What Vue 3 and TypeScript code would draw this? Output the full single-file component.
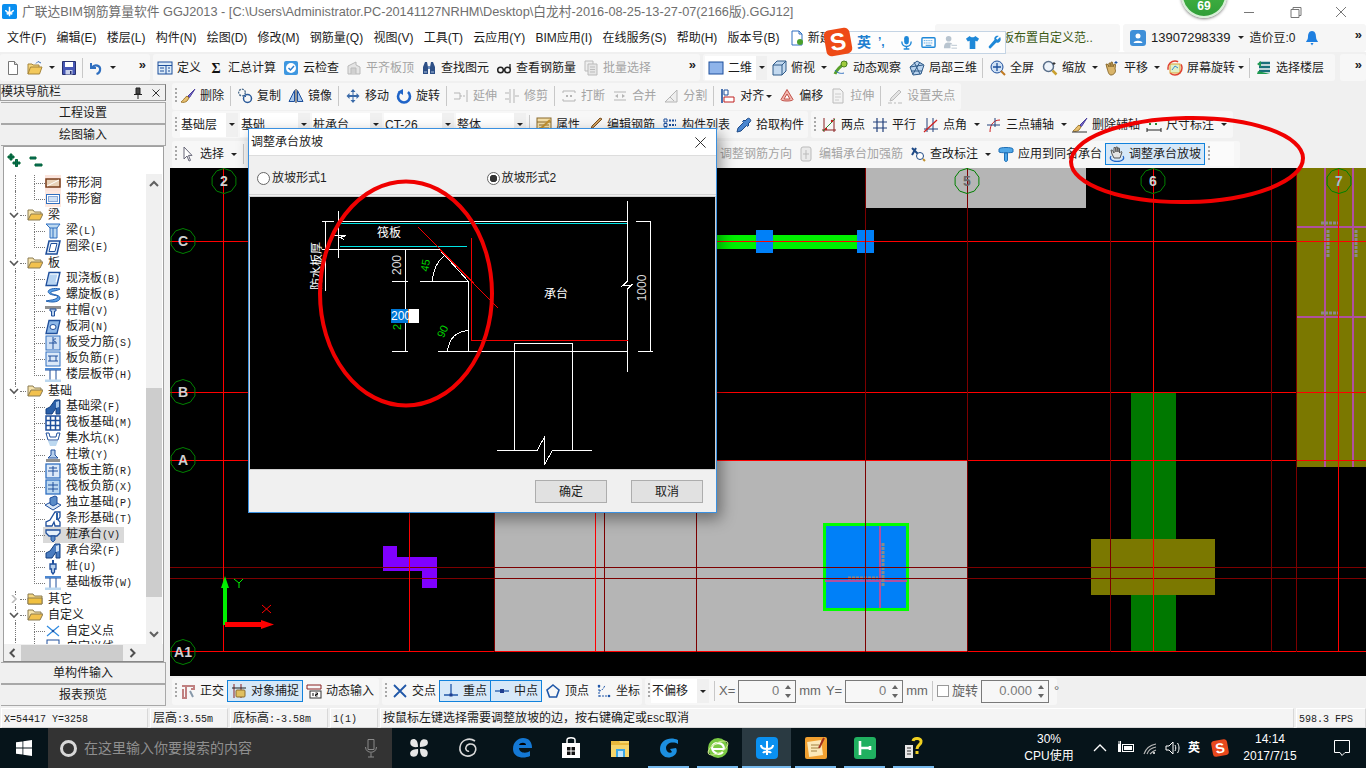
<template>
  <div class="screen">
    <header class="titlebar">
      <svg class="app-ico" viewBox="0 0 16 16" v-html="ICONS.app"></svg>
      <span class="title-text">广联达BIM钢筋算量软件 GGJ2013 - [C:\Users\Administrator.PC-20141127NRHM\Desktop\白龙村-2016-08-25-13-27-07(2166版).GGJ12]</span>
      <div class="winbtns">
        <svg viewBox="0 0 46 20"><path d="M18 10.5h10" stroke="#777" fill="none"/></svg>
        <svg viewBox="0 0 46 20"><path d="M19 7.5h8v8h-8zM21 7.5v-2h8v8h-2" stroke="#777" fill="none"/></svg>
        <svg viewBox="0 0 46 20"><path d="M18 5l10 10M28 5L18 15" stroke="#777" fill="none"/></svg>
      </div>
    </header>

    <nav class="menubar">
      <span v-for="m in menus" :key="m" class="menu">{{ m }}</span>
      <span class="menu newdoc">
        <svg class="ico" viewBox="0 0 16 16" v-html="ICONS.newdoc"></svg>新建
      </span>
      <span class="news">筏板布置自定义范..</span>
      <div class="account">
        <svg class="ico" viewBox="0 0 16 16" v-html="ICONS.user"></svg>
        <span class="phone">13907298339</span>
        <i class="caret"></i>
        <span class="beans">造价豆:0</span>
        <svg class="ico bell" viewBox="0 0 16 16" v-html="ICONS.bell"></svg>
        <span class="more">»</span>
      </div>
    </nav>

    <div class="desk">
      <section v-for="row in toolRows" :key="row.id" class="toolrow" :class="row.id">
        <div v-for="(seg, si) in row.segs" :key="si" class="seg" :class="seg.cls">
          <template v-for="(it, ii) in seg.items" :key="ii">
            <i v-if="it.k === 'sep'" class="sep"></i>
            <i v-else-if="it.k === 'grip'" class="grip" :style="it.m ? { marginRight: it.m + 'px' } : undefined"></i>
            <i v-else-if="it.k === 'drop'" class="caret drop" :style="it.m ? { marginLeft: it.m + 'px' } : undefined"></i>
            <i v-else-if="it.k === 'gap'" :style="{ width: it.w + 'px' }"></i>
            <span v-else-if="it.k === 'more'" class="more">»</span>
            <span v-else-if="it.k === 'combo'" class="combo" :style="{ width: it.w + 'px', marginLeft: (it.m || 0) + 'px' }">
              <svg v-if="it.i" class="ico" viewBox="0 0 16 16" v-html="ICONS[it.i]"></svg>
              <span class="combo-text">{{ it.t }}</span>
              <b class="combo-btn"><i class="caret"></i></b>
            </span>
            <span v-else-if="it.k === 'label'" class="label" :style="{ marginLeft: (it.m || 0) + 'px' }">{{ it.t }}</span>
            <span v-else-if="it.k === 'field'" class="field" :style="{ width: it.w + 'px' }">
              <span>{{ it.t }}</span>
              <b class="spin"><i></i><i></i></b>
            </span>
            <i v-else-if="it.k === 'check'" class="check"></i>
            <i v-else-if="it.k === 'blank'" class="blank"></i>
            <span v-else class="tool" :class="{ off: it.off, on: it.on, bare: !it.t }" :style="it.m ? { marginLeft: it.m + 'px' } : undefined">
              <svg class="ico" viewBox="0 0 16 16" v-html="ICONS[it.i!]"></svg>
              <span v-if="it.t">{{ it.t }}</span>
            </span>
          </template>
        </div>
      </section>

      <aside class="nav">
        <div class="nav-head">
          <span>模块导航栏</span>
          <span class="nav-tools">
            <svg viewBox="0 0 10 12"><path d="M3 1h4v6H3zM1 7.5h8M5 8v4" stroke="#222" fill="#444"/></svg>
            <svg viewBox="0 0 10 12"><path d="M1.5 2.5l7 7M8.5 2.5l-7 7" stroke="#333" fill="none"/></svg>
          </span>
        </div>
        <button class="nav-btn">工程设置</button>
        <button class="nav-btn">绘图输入</button>
        <div class="tree">
          <div class="tree-tools">
            <svg viewBox="0 0 14 16" v-html="ICONS.expand"></svg>
            <svg viewBox="0 0 14 16" v-html="ICONS.collapse"></svg>
          </div>
          <div class="tree-mid">
            <ul class="tree-list">
              <li v-for="r in treeRows" :key="r.n" class="row" :class="[r.lv ? 'leaf' : 'group', { trunk: r.trunk, tail: r.tail }]">
                <template v-if="r.lv">
                  <span class="leaf-in" :class="{ sel: r.sel }">
                    <svg class="ico" viewBox="0 0 16 16" v-html="ICONS[r.i]"></svg>
                    <span class="tree-name">{{ r.n }}<em v-if="r.key">{{ r.key }}</em></span>
                  </span>
                </template>
                <template v-else>
                  <svg class="chev" viewBox="0 0 10 8"><path :d="r.closed ? 'M3 0l4 4-4 4' : 'M1 2l4 4 4-4'" fill="none" :stroke="r.closed ? '#bbb' : '#555'" stroke-width="1.6"/></svg>
                  <svg class="ico" viewBox="0 0 16 16" v-html="r.closed ? ICONS.folder : ICONS.folderOpen"></svg>
                  <span class="tree-name">{{ r.n }}</span>
                </template>
              </li>
            </ul>
            <div class="vscroll">
              <svg viewBox="0 0 16 12"><path d="M4 8l4-4 4 4" fill="none" stroke="#606060" stroke-width="2"/></svg>
              <i class="vtrack"><i class="vthumb"></i></i>
              <svg viewBox="0 0 16 12"><path d="M4 4l4 4 4-4" fill="none" stroke="#606060" stroke-width="2"/></svg>
            </div>
          </div>
          <div class="hscroll">
            <svg viewBox="0 0 14 16"><path d="M9 4L5 8l4 4" fill="none" stroke="#505050" stroke-width="2"/></svg>
            <i class="hthumb"></i>
            <svg class="hnext" viewBox="0 0 14 16"><path d="M5 4l4 4-4 4" fill="none" stroke="#505050" stroke-width="2"/></svg>
          </div>
        </div>
        <button class="nav-btn">单构件输入</button>
        <button class="nav-btn">报表预览</button>
      </aside>

      <div class="canvas">
        <svg class="cad" viewBox="170 168 1196 508" width="1196" height="508">
          <rect x="866" y="168" width="220" height="40" fill="#b5b5b5"/>
          <rect x="495" y="461" width="472" height="191" fill="#b5b5b5"/>
          <rect x="700" y="235" width="174" height="14" fill="#00f000"/>
          <rect x="756" y="230" width="17" height="23" fill="#0080f8"/>
          <rect x="857" y="230" width="17" height="23" fill="#0080f8"/>
          <rect x="1131" y="393" width="45" height="259" fill="#007800"/>
          <rect x="1091" y="539" width="124" height="56" fill="#7b7800"/>
          <rect x="1297" y="168" width="69" height="299" fill="#7b7800"/>
          <path d="M383 546h14v11h40v31h-15v-17h-39z" fill="#8000ff"/>
          <rect x="824.5" y="524.5" width="83" height="85" fill="#0080f8" stroke="#00ff00" stroke-width="3"/>
          <g stroke="#b050a0" stroke-width="2" fill="none">
            <path d="M880 526v82M825 581h82"/>
            <path d="M1325 168v299M1353 168v299M1297 227h69M1297 317h69"/>
          </g>
          <g stroke="#8a8a8a" stroke-width="3" stroke-dasharray="3 1" fill="none">
            <path d="M883 543v44M848 578h30"/>
            <path d="M1328 230v28M1356 230v28M1321 223h18M1321 313h18"/>
          </g>
          <g shape-rendering="crispEdges">
            <path v-for="l in gridLines" :key="l.d" :d="l.d" :stroke="l.c" fill="none"/>
          </g>
          <g v-for="a in axisMarks" :key="a.t">
            <polygon :points="a.pts" fill="none" stroke="#008000"/>
            <text :x="a.x" :y="a.y + 5" class="axis-text" :fill="a.c" text-anchor="middle">{{ a.t }}</text>
          </g>
          <path d="M223 625v-37h-2l4-12 4 12h-2v37z" fill="#00f000"/>
          <path d="M225 622h36v-2l13 4.500-13 4.500v-2h-36z" fill="#ff0000"/>
          <path d="M234 579l5 4 4-4M239 583v5" stroke="#00f000" fill="none"/>
          <path d="M262 605l9 8M271 605l-9 8" stroke="#ff0000" fill="none"/>
        </svg>
      </div>
    </div>

    <footer class="status">
      <span v-for="s in statusCells" :key="s.c" class="cell" :class="s.c">
        {{ s.a }}<em v-if="s.b">{{ s.b }}</em>{{ s.z }}
      </span>
    </footer>

    <div class="taskbar">
      <svg class="win" viewBox="0 0 16 16"><path d="M0 2.300l6.500-.9v6.200H0zM7.300 1.300L16 0v7.600H7.300zM0 8.400h6.500v6.200L0 13.700zM7.300 8.400H16V16l-8.700-1.300z" fill="#fff"/></svg>
      <div class="search">
        <i class="cortana"></i>
        <span>在这里输入你要搜索的内容</span>
        <svg viewBox="0 0 16 20"><path d="M5 1.500h6v10H5zM2.500 9c0 7 11 7 11 0M8 15v4M5 19h6" fill="none" stroke="#8a8a8a"/></svg>
      </div>
      <div class="apps">
        <span v-for="a in apps" :key="a.i" class="app" :class="{ open: a.open, active: a.active, shift: a.shift }">
          <svg viewBox="0 0 24 24" v-html="ICONS[a.i]"></svg>
        </span>
      </div>
      <div class="tray">
        <span class="cpu">30%<br>CPU使用</span>
        <span v-for="t in trayIcons" :key="t.i" class="tray-ico" :style="{ width: t.w + 'px' }">
          <svg viewBox="0 0 18 18" v-html="ICONS[t.i]"></svg>
        </span>
        <span class="ime-en">英</span>
        <span class="tray-s">S</span>
        <span class="clock">14:14<br>2017/7/15</span>
        <svg class="notify" viewBox="0 0 18 18"><path d="M1.500 1.500h15v12h-4.500l-3 3-2-3H1.500z" fill="none" stroke="#fff"/></svg>
      </div>
    </div>

    <div class="badge"><span>69</span></div>

    <div class="ime">
      <span class="ime-logo">S</span>
      <div class="ime-bar">
        <b>英</b>
        <span class="ime-punct">’,</span>
        <svg v-for="k in imeKeys" :key="k" viewBox="0 0 16 16" v-html="ICONS[k]"></svg>
      </div>
    </div>

    <div class="dialog">
      <div class="dlg-title">
        <span>调整承台放坡</span>
        <svg viewBox="0 0 14 14"><path d="M1.500 1.500l11 11M12.500 1.500l-11 11" stroke="#222" fill="none"/></svg>
      </div>
      <div class="dlg-radios">
        <span class="radio"><i></i>放坡形式1</span>
        <span class="radio checked"><i></i>放坡形式2</span>
      </div>
      <div class="dlg-pic">
        <svg viewBox="250 197 465 272" width="465" height="272">
          <g shape-rendering="crispEdges">
            <g stroke="#fff" fill="none">
              <path d="M338 221.500h289.500M325 249.500h114M338.500 211v47M325.500 221v70M322 221.500h12"/>
              <path d="M332 235.500h14l-6 2 4 2M322 249.500h6"/>
              <path d="M439 249l29.500 32.500M420 281.500h48.500v70.500M405.500 250v102M392 281.500h16M392 351.500h16M438 351.500h189.500"/>
              <path d="M432 281Q434 264 444 256M447.500 351Q450 332 468 330.500"/>
              <path d="M627.500 201v80l-5 5 9-1-4 4v83M650.500 221.500v130M636 221.500h15M638 351.500h15"/>
              <path d="M514.500 351.500V343.500h58v107M514.500 351.500v99"/>
              <path d="M497 450.500h40l7.500-13.500v27.500l8-14h39.500"/>
            </g>
            <path d="M340 223.500h287M340 246.500h127" stroke="#00e5e5" fill="none"/>
            <path d="M418 227l80 81M471.500 238v102.500h156" stroke="#f00000" fill="none"/>
          </g>
          <text x="389" y="237" class="pic-text" text-anchor="middle">筏板</text>
          <text x="556" y="298" class="pic-text" text-anchor="middle">承台</text>
          <text class="pic-text" text-anchor="middle" transform="translate(321 266) rotate(-90)">防水板厚</text>
          <text class="pic-num" text-anchor="middle" transform="translate(401 265) rotate(-90)">200</text>
          <text class="pic-num" text-anchor="middle" transform="translate(646 288) rotate(-90)">1000</text>
          <text class="pic-green" text-anchor="middle" transform="translate(429 266) rotate(-80)">45</text>
          <text class="pic-green" text-anchor="middle" transform="translate(446 333) rotate(-65)">90</text>
          <text class="pic-green" text-anchor="middle" transform="translate(401 327) rotate(-90)">2</text>
          <rect x="391" y="309" width="28" height="14" fill="#fff"/>
          <rect x="391" y="309" width="17" height="14" fill="#0078d7"/>
          <path d="M408.500 309v14" stroke="#f08020" fill="none"/>
          <text x="391" y="320" class="pic-sel">200</text>
        </svg>
      </div>
      <div class="dlg-foot">
        <button>确定</button>
        <button>取消</button>
      </div>
    </div>

    <svg class="marks" viewBox="0 0 1366 768" width="1366" height="768">
      <ellipse cx="406" cy="293.500" rx="86" ry="112" fill="none" stroke="#f00000" stroke-width="4"/>
      <ellipse cx="1187" cy="160" rx="116" ry="42" fill="none" stroke="#f00000" stroke-width="4" transform="rotate(-1 1187 160)"/>
    </svg>
  </div>
</template>

<script setup lang="ts">
interface Item {
  k?: string
  i?: string
  t?: string
  off?: boolean
  on?: boolean
  w?: number
  m?: number
}
interface Seg {
  cls: string
  items: Item[]
}

const SEP: Item = { k: 'sep' }
const GRIP: Item = { k: 'grip', m: -4 }
const DROP: Item = { k: 'drop' }
const MORE: Item = { k: 'more' }

function tool(i: string, t?: string, extra: Item = {}): Item {
  return { i, t, ...extra }
}
function off(i: string, t: string): Item {
  return { i, t, off: true }
}
function combo(t: string, w: number, i?: string): Item {
  return { k: 'combo', t, w, i }
}

const blue = '#2f6fc0'
const navy = '#1d4f9c'
const ICONS: Record<string, string> = {
  app: `<rect width="16" height="16" rx="2" fill="#0a8ff0"/><path d="M8 3v10M4 6.500c0 2 1 2.500 4 2.500s4-.5 4-2.500M5 11c1-1 5-1 6 0" fill="none" stroke="#fff" stroke-width="1.600"/>`,
  newdoc: `<path d="M3 1h7l3 3v11H3z" fill="#fff" stroke="#2f6fc0"/><path d="M10 1v3h3" fill="none" stroke="#2f6fc0"/><circle cx="11" cy="12" r="3" fill="#4aa02c"/>`,
  user: `<rect width="16" height="16" rx="3" fill="#3f8fd8"/><circle cx="8" cy="6" r="2.500" fill="#fff"/><path d="M3.500 13c.5-3 8.500-3 9 0z" fill="#fff"/>`,
  bell: `<path d="M8 1c-3 0-4 3-4 6 0 3-2 4-2 5h12c0-1-2-2-2-5 0-3-1-6-4-6z" fill="#1e7fe0"/><path d="M6.500 13h3L8 15.500z" fill="#1e7fe0"/>`,
  new: `<path d="M3.500 1.500h6l3 3v10h-9z" fill="#fff" stroke="#777"/><path d="M9.500 1.500v3h3" fill="#ddd" stroke="#777"/>`,
  open: `<path d="M1 14V4h4l1 1h6v2" fill="#f6d77c" stroke="#a5843a"/><path d="M1 14l2.500-7H15l-2.500 7z" fill="#f3c95c" stroke="#a5843a"/><path d="M9 3.500l2-2 3 1.500" fill="none" stroke="#3a6db5"/>`,
  save: `<path d="M1.500 1.500h13v13h-13z" fill="#4657b5" stroke="#26306e"/><path d="M4 2h8v5H4z" fill="#fff"/><path d="M4.500 10h7v4.500h-7z" fill="#c9d1ea"/><path d="M9 11h1.500v3H9z" fill="#26306e"/>`,
  undo: `<path d="M3 3v5h5" fill="none" stroke="#2f6fc0" stroke-width="2"/><path d="M4 7.500c3-4 9-2 8 3-.3 1.500-1.500 3-3.500 3.500" fill="none" stroke="#2f6fc0" stroke-width="2.200"/>`,
  define: `<rect x="1" y="2" width="14" height="12" fill="#dcebf8" stroke="${navy}"/><path d="M1 5.500h14M9 5.500V14M3 8h4M3 11h4M11 8h2M11 11h2" stroke="${navy}" fill="none"/>`,
  sigma: `<text x="8" y="13" font-size="14" font-weight="700" text-anchor="middle" font-family="Liberation Serif" fill="#111">Σ</text>`,
  cloud: `<rect x="1" y="1" width="14" height="14" rx="2" fill="#3e97e0"/><circle cx="8" cy="8" r="5" fill="#fff"/><path d="M5.500 8l2 2 3.500-4" fill="none" stroke="#2f7fd0" stroke-width="1.500"/>`,
  flush: `<path d="M2 14V6l8-4v3l4 2v7z" fill="#e4e4e4" stroke="#b9b9b9"/><path d="M5 14V8h5v6" fill="#d0d0d0" stroke="#bbb"/>`,
  binoc: `<path d="M2 14V7l2-5h2l1 5v7zM9 14V7l1-5h2l2 5v7z" fill="#2d4f86"/><path d="M7 6h2v3H7z" fill="#6c8dbd"/><path d="M3 12h3M10 12h3" stroke="#a9c0e0"/>`,
  glasses: `<circle cx="4.500" cy="10" r="2.800" fill="none" stroke="#222" stroke-width="1.500"/><circle cx="11.500" cy="10" r="2.800" fill="none" stroke="#222" stroke-width="1.500"/><path d="M7 10h2M14 9V4" stroke="#222" stroke-width="1.300" fill="none"/>`,
  batch: `<path d="M2 1h8v10H2z" fill="#eee" stroke="#bbb"/><path d="M5 4h9v11H5z" fill="#e6e6e6" stroke="#bbb"/><path d="M7 7h5M7 9.500h5M7 12h5" stroke="#bbb"/>`,
  two: `<rect x="1" y="2" width="14" height="12" fill="#8fb4ea" stroke="${navy}"/>`,
  cube: `<path d="M2 5l4-4h9v10l-4 4H2z" fill="#c3d9ef" stroke="#2e5a88"/><path d="M2 5h9v10M11 5l4-4" fill="none" stroke="#2e5a88"/>`,
  orbit: `<path d="M2 14c2-5 7-9 12-12" stroke="#58a02a" stroke-width="3" fill="none"/><circle cx="11" cy="4" r="3" fill="#9ecb3c" stroke="#4b7f20"/><path d="M2 10c2 3 6 4 9 3" stroke="#2f6fc0" fill="none"/>`,
  local3d: `<path d="M8 1l7 4-3 9-8 1-3-8z" fill="#b9d3ee" stroke="#2e5a88"/><path d="M5 2l6 12M11 2L4 14M1 7l13-2M2 11l11 0" stroke="#2e5a88" fill="none"/>`,
  full: `<circle cx="7" cy="7" r="6" fill="#cfe1f5" stroke="${navy}"/><path d="M7 3v8M3 7h8" stroke="${navy}" stroke-width="1.300"/><path d="M11 11l4 4" stroke="#c07a20" stroke-width="2"/>`,
  zoom: `<circle cx="6.500" cy="6.500" r="5" fill="#eef4fb" stroke="#5a6f8a" stroke-width="1.500"/><path d="M10.500 10.500l4 4" stroke="#c9a030" stroke-width="2.500"/><path d="M12 2v3M10.500 3.500h3" stroke="#333"/>`,
  pan: `<path d="M3 8L2 4l2 .5L5 7V3l1.500.3L7 7V2l1.500.3L9 7l1-3 1.500.5L11 9c1.500 2-.5 6-4 6-2.500 0-3-4-4-7z" fill="#d9b46a" stroke="#8a6a2c"/><path d="M12 1v3M10.500 2.500h3" stroke="${navy}"/>`,
  spin: `<rect x="3" y="4" width="10" height="9" fill="#dff0c8" stroke="#e0a030"/><circle cx="8" cy="8" r="7" fill="none" stroke="#e04030" stroke-width="1.500" stroke-dasharray="16 4"/><path d="M5 10l3-4 3 2" stroke="#3a8ad0" fill="none"/>`,
  floors: `<path d="M3 3h11M3 7h11M3 11h11" stroke="#19707a" stroke-width="2.500"/><path d="M5 1L1 4l4 3zM2 11l-1 3h13" fill="#1f9b50"/>`,
  brush: `<path d="M15 1L8 8l1.500 1.500z" fill="#7a6bd0" stroke="#4a3f9c"/><path d="M7 8l2 2-2 3c-1 1-4 2-6 1 2-1 3-4 6-6z" fill="#e8c070" stroke="#a07a30"/>`,
  copy: `<circle cx="5" cy="4.500" r="3.300" fill="none" stroke="#4a6a8a" stroke-width="1.300" stroke-dasharray="2 1"/><circle cx="10.500" cy="10.500" r="4" fill="none" stroke="#2a5a9a" stroke-width="1.500"/><path d="M7 7l2 2" stroke="#2a5a9a"/>`,
  mirror: `<path d="M8 1v14" stroke="#333"/><path d="M6.500 2.500v11H1zM9.500 2.500v11H15z" fill="#a9c8ec" stroke="${navy}"/>`,
  move: `<path d="M8 1l2.500 3h-2v3h3V5l3 3-3 3V9h-3v3h2L8 15l-2.500-3h2V9h-3v2l-3-3 3-3v2h3V4h-2z" fill="#3a6aa8"/>`,
  rotate: `<path d="M4 4A6 6 0 1 0 12 4" fill="none" stroke="#1f64c8" stroke-width="2.600"/><path d="M7 1v6L2 3.500z" fill="#1f64c8"/>`,
  extend: `<path d="M1 5h6v6H1M14 2v12" stroke="#b5b5b5" fill="none"/><path d="M7 8h6" stroke="#b5b5b5" stroke-dasharray="2 1"/>`,
  trim: `<path d="M6 1v14M10 1v14M1 5h4M1 11h4M11 8h4" stroke="#b5b5b5" fill="none"/>`,
  cut: `<path d="M2 3h12M2 13h12M2 3v2M14 3v2M2 11v2M14 11v2" stroke="#b5b5b5" fill="none"/><path d="M5 8h2M9 8h2" stroke="#b5b5b5" stroke-width="2"/>`,
  merge: `<path d="M2 4h12M2 12h12" stroke="#b5b5b5" fill="none"/><path d="M3 8l3-2v4zM13 8l-3-2v4z" fill="#b5b5b5"/>`,
  split: `<path d="M2 14L14 2v12z" fill="#eee" stroke="#b5b5b5"/><path d="M7 9l4 4" stroke="#b5b5b5"/>`,
  align: `<path d="M2 1v14" stroke="${navy}" stroke-width="1.600"/><path d="M4 2h4v5H4z" fill="#fff" stroke="${navy}"/><path d="M4 9h10v5H4z" fill="#fff" stroke="#c02020"/>`,
  offset: `<path d="M8 1.500l6 10c0 2-12 2-12 0z" fill="#f4b8b0" stroke="#c05048"/><path d="M8 6l3 5H5z" fill="#fff" stroke="#c05048"/>`,
  stretch: `<path d="M3 1h7l3 3v11H3z" fill="#f3f3f3" stroke="#bbb"/><path d="M5 6h6M5 9h6M5 12h4" stroke="#ccc"/>`,
  grips: `<path d="M12 2l2 2-8 8-3 1 1-3z" fill="#e3e3e3" stroke="#bbb"/><path d="M1 15h4M7 15h2M11 15h4" stroke="#bbb"/>`,
  props: `<rect x="1" y="1" width="14" height="14" fill="#f4dfa8" stroke="#8a6a2c"/><path d="M1 5h14M3 8h10M3 11h10" stroke="#8a6a2c"/><path d="M2 14L14 3" stroke="#c09030" stroke-width="2"/>`,
  edit: `<path d="M1 14h11" stroke="#111" stroke-width="2"/><path d="M15 2L7 10l-3 2 1-3 8-8z" fill="#d0a060" stroke="#7a5020"/>`,
  list: `<path d="M2 2h3v3H2zM2 6.500h3v3H2zM2 11h3v3H2z" fill="#fff" stroke="${navy}"/><path d="M7 3.500h7M7 8h7M7 12.500h7" stroke="${navy}" stroke-width="2" stroke-dasharray="2 1"/>`,
  pick: `<path d="M14 2c-1-1-2-1-3 0L9 4 8 3 6.500 4.500l1 1L2 11l-1 4 4-1 5.500-5.500 1 1L13 8l-1-1 2-2c1-1 1-2 0-3z" fill="#4a86d0" stroke="#1f4a86"/>`,
  twopt: `<path d="M3 1v14M13 1v14M1 13h14" stroke="#8a2020" fill="none"/><path d="M2 14L14 2" stroke="#2a8a30"/><circle cx="5" cy="12" r="1.200" fill="#c02020"/><circle cx="11" cy="4" r="1.200" fill="#c02020"/>`,
  para: `<path d="M5 1v14M11 1v14M1 5h14M1 11h14" stroke="#22407a" stroke-width="1.200" fill="none"/>`,
  angle: `<path d="M4 1v14M10 1v14M1 12h14" stroke="#22407a" fill="none"/><path d="M1 15L14 3" stroke="#d02020" stroke-width="1.300"/>`,
  arcaxis: `<path d="M4 15C4 7 8 3 14 3" stroke="#d02020" fill="none"/><path d="M1 8h13M9 1v9" stroke="#22407a" fill="none"/>`,
  delaxis: `<path d="M15 1L8 8l1.500 1.500z" fill="#7a6bd0" stroke="#4a3f9c"/><path d="M7 8l2 2-2 3c-1 1-4 2-6 1 2-1 3-4 6-6z" fill="#e8c070" stroke="#a07a30"/><path d="M0 15h15" stroke="#333"/>`,
  dim: `<path d="M1 11v4M15 11v4M1 13h14" stroke="#222" fill="none"/><path d="M3 4h2M3 7h2M9 7h2" stroke="#2a8a30" stroke-width="2"/>`,
  arrow: `<path d="M4 1v12l3-3 2 5 1.500-.6-2-5H12z" fill="#fff" stroke="#667"/>`,
  dirbar: `<path d="M2 4h12M2 12h12" stroke="#bbb"/><path d="M8 2v12" stroke="#ccc"/>`,
  addbar: `<rect x="2" y="1" width="10" height="14" rx="2" fill="#eaeaea" stroke="#bbb"/><path d="M7 4v9M4 8h6" stroke="#bbb"/>`,
  review: `<path d="M2 2l10 10M2 9l4-7" stroke="#1f4a86" stroke-width="2"/><circle cx="10" cy="10" r="3.500" fill="#fff" stroke="#1f4a86"/><path d="M13 13l2 2" stroke="#c09030" stroke-width="2"/>`,
  apply: `<path d="M1 3c0-2 14-2 14 0v3c0 1-14 1-14 0z" fill="#4fa7e8" stroke="#1f6fb5"/><path d="M6.500 7h3v7c0 2-3 2-3 0z" fill="#4fa7e8" stroke="#1f6fb5"/>`,
  hand: `<path d="M3 8L2 4l1.500.3L5 7V1.500l1.500.2L7 6V1l1.500.2L9 6V2l1.500.3V7l1.500-1.500 1 .7L11 12H5z" fill="#e4e4e4" stroke="#555"/><path d="M2 10c-2 3 1 5.500 6 5.500S16 13 14 10" fill="none" stroke="#1f64c8" stroke-width="1.300"/>`,
  ortho: `<path d="M2 3h12v3h-3M6 3v12H3V6" fill="none" stroke="#c08080" stroke-width="2"/><path d="M10 8l3 6" stroke="#8899aa" stroke-width="2"/>`,
  snap: `<path d="M3 1v14M10 1v14" stroke="#8a2020"/><path d="M1 5h14" stroke="#222"/><rect x="5" y="7" width="9" height="7" rx="1" fill="#e0c060" stroke="#8a6a2c"/>`,
  dyn: `<path d="M1 2h14v4H1z" fill="none" stroke="#8a2020"/><rect x="4" y="8" width="11" height="7" fill="#fff" stroke="#333"/><path d="M7 10v3M9.500 10h2v1.500h-2v1.500h2" stroke="#111" fill="none"/>`,
  cross: `<path d="M2 2l12 12M14 2L2 14" stroke="#2057a8" stroke-width="1.800"/>`,
  perp: `<path d="M1 12h14M8 1v11" stroke="#2057a8" stroke-width="1.300"/><rect x="6.500" y="10.500" width="3" height="3" fill="#1f3f90"/>`,
  mid: `<path d="M1 8h14" stroke="#2057a8" stroke-width="1.300"/><rect x="6" y="6" width="4" height="4" fill="#1f3f90"/>`,
  vertex: `<path d="M8 2l6 5-2.500 7h-7L2 7z" fill="none" stroke="#2057a8" stroke-width="1.600"/>`,
  coord: `<path d="M3 14V2M3 13h11M3 8c3 0 5-3 6-6" stroke="#2057a8" stroke-dasharray="2 1" fill="none"/><circle cx="3" cy="3" r="1.300" fill="#2057a8"/><circle cx="13" cy="13" r="1.300" fill="#2057a8"/>`,
  expand: `<path d="M1 3h6v2H1zM3 1h2v6H3zM6 9h7v2H6zM8.500 6.500h2v7h-2z" fill="#0d6b6b" stroke="#063"/>`,
  collapse: `<path d="M1 4h6v2H1zM6 11h7v2H6z" fill="#0d6b6b" stroke="#063"/>`,
  folder: `<path d="M1 13V3h5l1.500 2H15v8z" fill="#f5d780" stroke="#8a7a50"/><path d="M1 13l0-6h14v6z" fill="#f0c040" stroke="#8a7a50"/>`,
  folderOpen: `<path d="M1 13V3h5l1.500 2H14v3" fill="#f7e4ad" stroke="#8a7a50"/><path d="M1 13l3-6h12l-3 6z" fill="#f2c14e" stroke="#8a7a50"/>`,
  t_hole: `<rect x="0" y="0" width="16" height="16" fill="#fbe4dc"/><rect x="1" y="4" width="14" height="8" fill="#e9d2b8" stroke="#7a3e1c" stroke-width="1.500"/><path d="M2 11L14 5" stroke="#fff"/>`,
  t_win: `<rect x="0" y="0" width="16" height="16" fill="#fde8e0"/><rect x="1.500" y="3.500" width="13" height="9" fill="#fff" stroke="${blue}"/><rect x="3.500" y="5.500" width="9" height="5" fill="#cfe0f5" stroke="#8aa8d8"/>`,
  t_beam: `<path d="M1 1h14l-3 4v10H5V5z" fill="#bcd8f0" stroke="${blue}"/><path d="M5 5h7M8 5v10" stroke="${blue}"/>`,
  t_ring: `<path d="M4 2h11l-3 13H1z" fill="#e4effa" stroke="#1f4f9c" stroke-width="1.500"/><path d="M6 4.500h6l-2 8H4z" fill="#fff" stroke="#1f4f9c"/>`,
  t_slab: `<path d="M4 1.500h11L12 14.500H1z" fill="#b7d4f2" stroke="#1f4f9c" stroke-width="1.300"/><path d="M5 3h8l-2 8" stroke="#fff" fill="none"/>`,
  t_helix: `<path d="M15 2C6 0 0 4 5 7c4 2 10 1 7 4-2 2-7 2-11 3 6 2 14 1 14-3 0-4-11-3-9-6 1-1 6-1 9-3z" fill="#5aa0e8" stroke="#1f5fb0"/>`,
  t_cap: `<path d="M0 3h16v3H0z" fill="#909090"/><path d="M5 6h6v2H9.500v5h-3V8H5z" fill="#b8d0ec" stroke="#1f4f9c"/>`,
  t_shole: `<path d="M4 1.500h11L12 14.500H1z" fill="#8eb8e8" stroke="#1f4f9c" stroke-width="1.300"/><ellipse cx="8" cy="8" rx="3" ry="2.500" fill="#fff" stroke="#1f4f9c"/>`,
  t_force: `<rect x="1" y="1" width="14" height="14" fill="#cfe0f5" stroke="${blue}"/><path d="M8 2v12M4 8h8M11 4c-3-1-3 3 0 3" fill="none" stroke="#1f4f9c"/>`,
  t_neg: `<rect x="1" y="1" width="14" height="14" fill="#dce9f8" stroke="${blue}"/><path d="M3 5h10M3 10h10M5 5v5M11 5v5" fill="none" stroke="#1f4f9c"/>`,
  t_band: `<path d="M0 3h16M0 14h16M5 3v11M11 3v11" stroke="#1f4f9c"/><path d="M0 1h16v2H0z" fill="#4a86d0"/><path d="M0 12.500h16V15H0z" fill="#bcd8f0"/>`,
  t_fbeam: `<path d="M1 15V10l4-2 5-7h5v14h-4V9L7 15z" fill="#2a5fa8" stroke="#123f80"/><path d="M11 3l3-1v6l-3 1z" fill="#a8c8ec"/>`,
  t_raft: `<rect x="1" y="1" width="14" height="14" fill="#fff" stroke="#1f4f9c" stroke-width="1.500"/><path d="M1 5.500h14M1 10.500h14M5.500 1v14M10.500 1v14" stroke="#1f4f9c" stroke-width="1.500"/>`,
  t_sump: `<path d="M1 2l3 0 1 4h6l1-4h3l-2 7H3z" fill="#fff" stroke="#1f4f9c"/><path d="M3 10h10l-2 5H5z" fill="#bcd8f0"/>`,
  t_pier: `<path d="M1 12h14v3H1z" fill="#909090"/><path d="M3 11l3-3V3h4v5l3 3z" fill="#b8d0ec" stroke="#1f4f9c"/>`,
  t_main: `<rect x="1" y="1" width="14" height="14" fill="#dce9f8" stroke="${blue}" stroke-width="1.300"/><path d="M8 3v10M3 8h10M4 5h8" stroke="#1f4f9c"/>`,
  t_neg2: `<rect x="1" y="1" width="14" height="14" fill="#bcd8f0" stroke="${blue}" stroke-width="1.300"/><path d="M8 3v10M3 6h10M3 10h10" stroke="#1f4f9c"/>`,
  t_ind: `<path d="M0 10l8-4 8 4-8 5z" fill="#dce9f8" stroke="#1f4f9c"/><path d="M5 3l5-2 2 1v7l-4 2-3-2z" fill="#5a8cc8" stroke="#1f4f9c"/>`,
  t_strip: `<path d="M1 15v-4l4-2 5-8h5v5l-2 3 2 2v4H10l-1-4-2 4z" fill="#fff" stroke="#1f4f9c" stroke-width="1.300"/><path d="M12 2v7" stroke="#2a5fa8" stroke-width="2"/>`,
  t_pcap: `<path d="M1 3h14v3l-3 3H4L1 6z" fill="#e4effa" stroke="#1f4f9c" stroke-width="1.300"/><path d="M6 9h4v4l-2 2-2-2z" fill="#5a8cc8" stroke="#1f4f9c"/>`,
  t_cbeam: `<path d="M1 15v-5l4-2 5-7h5v14h-4V9L7 15z" fill="#4a7cc0" stroke="#123f80"/><path d="M11 3l3-1v6l-3 1z" fill="#d0e2f5"/>`,
  t_pile: `<path d="M5 5h6v5H9.500v3L8 15l-1.500-2v-3H5z" fill="#b8d0ec" stroke="#1f4f9c" stroke-width="1.300"/><path d="M8 1v4" stroke="#1f4f9c" stroke-width="2"/>`,
  t_point: `<path d="M2 3l12 10M14 3L2 13" stroke="#2f8ae0" stroke-width="1.200"/><circle cx="8" cy="8" r="1.200" fill="#1f4f9c"/>`,
  t_line: `<rect x="2" y="1" width="12" height="14" fill="#fff" stroke="#1f4f9c"/>`,
  pin: `<g fill="#e6e6e6"><path d="M11 11C4 12 2 8 4 4c3-2 7-1 7 7z"/><path d="M13 11C12 4 16 2 20 4c2 3 1 7-7 7z"/><path d="M13 13c7-1 9 3 7 7-3 2-7 1-7-7z"/><path d="M11 13c1 7-3 9-7 7-2-3-1-7 7-7z"/></g>`,
  spiral: `<path d="M19 5C13 1 5 4 4 11c-1 7 6 11 12 8 4-2 5-7 2-10-3-2-7-1-8 2-1 2 1 5 3 4" fill="none" stroke="#d8d8d8" stroke-width="1.600"/>`,
  edge: `<path d="M3 13C3 6 8 2 13 2c6 0 9 4 9 10H9c0 5 7 6 11 3v5c-6 3-17 2-17-7z" fill="#1478d4"/><path d="M9 9h7c0-3-6-3-7 0z" fill="#000"/>`,
  store: `<path d="M3 7h18v15H3z" fill="#fff"/><path d="M8 7V4c0-3 8-3 8 0v3" fill="none" stroke="#fff" stroke-width="1.500"/><path d="M8 11h3.500v3.500H8zM12.500 11H16v3.500h-3.500zM8 15.500h3.500V19H8zM12.500 15.500H16V19h-3.500z" fill="#111"/>`,
  files: `<path d="M3 5h18v16H3z" fill="#f5d56a"/><path d="M3 5h8l1 2h9v2H3z" fill="#e8b93c"/><path d="M8 13h9v8H8z" fill="#3aa6e6"/><path d="M10 15h5v6h-5z" fill="#bfe4fa"/>`,
  glodon: `<path d="M21 4c-8-4-18 0-18 9 0 6 6 10 11 8 5-1 7-6 5-9l-6 1 2 3c-2 2-6 0-6-4 0-5 7-7 12-4z" fill="#1c8fe0"/>`,
  ie360: `<circle cx="12" cy="12" r="10" fill="#7ac943"/><path d="M6 13h12c0-7-10-8-12-2 0 6 7 9 11 5" fill="none" stroke="#fff" stroke-width="2.200"/><ellipse cx="12" cy="12" rx="11" ry="5" fill="none" stroke="#c9e88a" transform="rotate(-30 12 12)"/>`,
  glodon2: `<rect x="1" y="1" width="22" height="22" rx="4" fill="#0a90f0"/><path d="M12 5v14M6 9c0 3 2 4 6 4s6-1 6-4M8 17c1-2 7-2 8 0" fill="none" stroke="#fff" stroke-width="2"/>`,
  notes: `<rect x="1" y="1" width="22" height="22" rx="2" fill="#f0a030"/><rect x="4" y="5" width="14" height="15" fill="#fbe8b8" transform="rotate(-8 11 12)"/><path d="M7 9h8M7 12h8M7 15h6" stroke="#a08040"/><path d="M20 2l-5 10" stroke="#a03020" stroke-width="2"/>`,
  hgreen: `<rect x="1" y="1" width="22" height="22" rx="3" fill="#20b060"/><path d="M7 5v14M7 12h10M17 10v4" stroke="#fff" stroke-width="2.600" fill="none"/>`,
  helpq: `<path d="M3 9h8v13H3z" fill="#e8e8e8"/><path d="M5 12h4M5 15h4M5 18h4" stroke="#333"/><path d="M11 5c1-4 9-3 8 1 0 3-4 3-4 7" fill="none" stroke="#f0d020" stroke-width="3"/><rect x="13.500" y="15" width="3" height="3" fill="#f0d020"/>`,
  up: `<path d="M3 12l6-6 6 6" fill="none" stroke="#fff" stroke-width="1.300"/>`,
  batt: `<path d="M1 5h3v8H1z" fill="#fff"/><rect x="5.500" y="5.500" width="11" height="7" fill="none" stroke="#fff"/><rect x="7" y="7" width="8" height="4" fill="#fff"/><path d="M2 2v3M3.500 2v3" stroke="#fff"/>`,
  wifi: `<path d="M3 15c2-6 6-9 12-10M6 15c1-3 4-6 9-7M9 15c1-1 3-3 6-4" fill="none" stroke="#bbb" stroke-width="1.100"/><circle cx="13" cy="14" r="1" fill="#fff"/>`,
  sound: `<path d="M2 7h3l4-4v12l-4-4H2z" fill="none" stroke="#fff"/><path d="M11 6c1 2 1 4 0 6M13.500 4c2 3 2 7 0 10" fill="none" stroke="#fff"/>`,
  mic: `<rect x="5.500" y="1" width="5" height="9" rx="2.500" fill="#1e88d8"/><path d="M3 7c0 7 10 7 10 0M8 12v3M5 15h6" fill="none" stroke="#1e88d8" stroke-width="1.500"/>`,
  keyb: `<rect x="1" y="3" width="14" height="10" rx="1" fill="none" stroke="#1e88d8" stroke-width="1.500"/><path d="M3 6h10M3 8.500h10" stroke="#1e88d8" stroke-dasharray="1 1"/><path d="M5 11h6" stroke="#1e88d8"/>`,
  person: `<circle cx="6" cy="4" r="3" fill="#b8c4cf"/><path d="M1 14c0-5 2-6 5-6s4 1 4 3v3z" fill="#b8c4cf"/><rect x="8" y="10" width="8" height="6" fill="#fff"/><path d="M9 11h6M9 14h6" stroke="#b8c4cf"/>`,
  shirt: `<path d="M5 1L1 4l2 3 2-1v9h6V6l2 1 2-3-4-3c-1 2-5 2-6 0z" fill="#1e88d8"/>`,
  wrench: `<path d="M14 2l-3 3-1.500-1.500L12.500 1C10 0 7 2 8 5L2 12c-1 1 1 3 2 2l6-6c3 1 6-2 4-6z" fill="#1e88d8"/>`,
}

const menus = ['文件(F)', '编辑(E)', '楼层(L)', '构件(N)', '绘图(D)', '修改(M)', '钢筋量(Q)', '视图(V)', '工具(T)', '云应用(Y)', 'BIM应用(I)', '在线服务(S)', '帮助(H)', '版本号(B)']

const toolRows: { id: string; segs: Seg[] }[] = [
  {
    id: 'r1',
    segs: [
      { cls: 's-file', items: [tool('new'), tool('open'), DROP, tool('save'), SEP, tool('undo'), DROP, MORE] },
      {
        cls: 's-main',
        items: [tool('define', '定义'), tool('sigma', '汇总计算'), tool('cloud', '云检查'), off('flush', '平齐板顶'), tool('binoc', '查找图元'), tool('glasses', '查看钢筋量'), off('batch', '批量选择'), MORE],
      },
      {
        cls: 's-view',
        items: [
          combo('二维', 62, 'two'),
          tool('cube', '俯视', { m: -2 }),
          DROP,
          tool('orbit', '动态观察'),
          tool('local3d', '局部三维', { m: 2 }),
          SEP,
          tool('full', '全屏', { m: 2 }),
          tool('zoom', '缩放', { m: 2 }),
          DROP,
          tool('pan', '平移'),
          DROP,
          tool('spin', '屏幕旋转', { m: 1 }),
          { k: 'drop', m: -3 },
          SEP,
          tool('floors', '选择楼层', { m: 1 }),
        ],
      },
      { cls: 's-end', items: [MORE] },
    ],
  },
  {
    id: 'r2',
    segs: [
      {
        cls: 's-edit',
        items: [
          GRIP, tool('brush', '删除'), SEP, tool('copy', '复制'), tool('mirror', '镜像'), SEP, tool('move', '移动'), tool('rotate', '旋转'), SEP,
          off('extend', '延伸'), off('trim', '修剪'), SEP, off('cut', '打断'), off('merge', '合并'), off('split', '分割'), SEP,
          tool('align', '对齐'), { k: 'drop', m: -5 }, tool('offset', '偏移'), off('stretch', '拉伸'), SEP, off('grips', '设置夹点'),
        ],
      },
    ],
  },
  {
    id: 'r3',
    segs: [
      {
        cls: 's-combos',
        items: [
          GRIP, combo('基础层', 58), combo('基础', 70), combo('桩承台', 70), combo('CT-26', 70), combo('整体', 70), SEP,
          tool('props', '属性'), tool('edit', '编辑钢筋'), tool('list', '构件列表'), tool('pick', '拾取构件', { m: -1 }),
        ],
      },
      {
        cls: 's-axis',
        items: [
          GRIP, tool('twopt', '两点', { m: 2 }), tool('para', '平行'), tool('angle', '点角'), DROP, tool('arcaxis', '三点辅轴', { m: -1 }), DROP,
          tool('delaxis', '删除辅轴', { m: -2 }), tool('dim', '尺寸标注', { m: -1 }), DROP,
        ],
      },
    ],
  },
  {
    id: 'r4',
    segs: [
      {
        cls: 's-pick',
        items: [
          GRIP, tool('arrow', '选择'), DROP, SEP, { k: 'gap', w: 443 },
          off('dirbar', '调整钢筋方向'), off('addbar', '编辑承台加强筋'), tool('review', '查改标注'), DROP, tool('apply', '应用到同名承台'),
          tool('hand', '调整承台放坡', { on: true }), GRIP, { k: 'blank' },
        ],
      },
    ],
  },
  {
    id: 'r5',
    segs: [
      { cls: 's-snap', items: [GRIP, tool('ortho', '正交'), tool('snap', '对象捕捉', { on: true }), tool('dyn', '动态输入')] },
      {
        cls: 's-point',
        items: [GRIP, tool('cross', '交点', { m: 2 }), tool('perp', '重点', { on: true }), tool('mid', '中点', { on: true }), tool('vertex', '顶点'), tool('coord', '坐标')],
      },
      {
        cls: 's-input',
        items: [
          GRIP, { ...combo('不偏移', 58), m: 2 }, SEP,
          { k: 'label', t: 'X=' }, { k: 'field', t: '0', w: 58 }, { k: 'label', t: 'mm' },
          { k: 'label', t: 'Y=', m: 2 }, { k: 'field', t: '0', w: 58 }, { k: 'label', t: 'mm' }, SEP,
          { k: 'check' }, { k: 'label', t: '旋转' }, { k: 'field', t: '0.000', w: 68 }, { k: 'label', t: '°', m: 2 },
        ],
      },
    ],
  },
]

interface TreeRow {
  n: string
  key?: string
  i: string
  lv: number
  sel?: boolean
  closed?: boolean
  trunk?: boolean
  tail?: boolean
}
function leaf(n: string, key: string, i: string, trunk = true, tail = false, sel = false): TreeRow {
  return { n, key, i, lv: 1, trunk, tail, sel }
}
function group(n: string, trunk = true, closed = false): TreeRow {
  return { n, i: '', lv: 0, trunk, closed }
}
const treeRows: TreeRow[] = [
  leaf('带形洞', '', 't_hole'),
  leaf('带形窗', '', 't_win', true, true),
  group('梁'),
  leaf('梁', '(L)', 't_beam'),
  leaf('圈梁', '(E)', 't_ring', true, true),
  group('板'),
  leaf('现浇板', '(B)', 't_slab'),
  leaf('螺旋板', '(B)', 't_helix'),
  leaf('柱帽', '(V)', 't_cap'),
  leaf('板洞', '(N)', 't_shole'),
  leaf('板受力筋', '(S)', 't_force'),
  leaf('板负筋', '(F)', 't_neg'),
  leaf('楼层板带', '(H)', 't_band', true, true),
  group('基础'),
  leaf('基础梁', '(F)', 't_fbeam', false),
  leaf('筏板基础', '(M)', 't_raft', false),
  leaf('集水坑', '(K)', 't_sump', false),
  leaf('柱墩', '(Y)', 't_pier', false),
  leaf('筏板主筋', '(R)', 't_main', false),
  leaf('筏板负筋', '(X)', 't_neg2', false),
  leaf('独立基础', '(P)', 't_ind', false),
  leaf('条形基础', '(T)', 't_strip', false),
  leaf('桩承台', '(V)', 't_pcap', false, false, true),
  leaf('承台梁', '(F)', 't_cbeam', false),
  leaf('桩', '(U)', 't_pile', false),
  leaf('基础板带', '(W)', 't_band', false, true),
  group('其它', true, true),
  group('自定义', true),
  leaf('自定义点', '', 't_point'),
  leaf('自定义线', '', 't_line'),
]

const BRIGHT = '#ff0000'
const DARK = '#7c0000'
const gridLines = [
  ...[241, 392, 460, 651].map((y) => ({ d: `M170 ${y + 0.5}H1366`, c: BRIGHT })),
  ...[567, 578].map((y) => ({ d: `M170 ${y + 0.5}H1366`, c: DARK })),
  ...[223, 409, 595, 1153, 1338].map((x) => ({ d: `M${x + 0.5} 168V652`, c: BRIGHT })),
  ...[494, 604, 696, 865, 967, 1110, 1271, 1296].map((x) => ({ d: `M${x + 0.5} 168V652`, c: DARK })),
]

function marker(t: string, x: number, y: number, c = '#d0d0d0') {
  const pts = Array.from({ length: 10 }, (_, k) => {
    const a = (Math.PI / 5) * k + Math.PI / 10
    return `${(x + 12.5 * Math.cos(a)).toFixed(1)},${(y + 12.5 * Math.sin(a)).toFixed(1)}`
  }).join(' ')
  return { t, x, y, c, pts }
}
const axisMarks = [
  marker('2', 224, 181), marker('5', 967, 181, '#686868'), marker('6', 1153, 181), marker('7', 1339, 181, '#9fc0d0'),
  marker('C', 183, 241), marker('B', 183, 392), marker('A', 183, 460), marker('A1', 183, 652),
]

const statusCells = [
  { c: 'c1', a: '', b: 'X=54417 Y=3258', z: '' },
  { c: 'c2', a: '层高', b: ':3.55m', z: '' },
  { c: 'c3', a: '底标高', b: ':-3.58m', z: '' },
  { c: 'c4', a: '', b: '1(1)', z: '' },
  { c: 'c5', a: '按鼠标左键选择需要调整放坡的边，按右键确定或', b: 'ESC', z: '取消' },
  { c: 'c6', a: '', b: '598.3 FPS', z: '' },
]

const apps = [
  { i: 'pin' }, { i: 'spiral' }, { i: 'edge', shift: true }, { i: 'store' }, { i: 'files' },
  { i: 'glodon', open: true }, { i: 'ie360', open: true }, { i: 'glodon2', open: true, active: true },
  { i: 'notes', open: true }, { i: 'hgreen', open: true }, { i: 'helpq', open: true },
]
const trayIcons = [
  { i: 'up', w: 26 }, { i: 'batt', w: 25 }, { i: 'wifi', w: 23 }, { i: 'sound', w: 23 },
]
const imeKeys = ['mic', 'keyb', 'person', 'shirt', 'wrench']
</script>

<style>
html,
body {
  margin: 0;
  overflow: hidden;
  background: #f0f0f0;
}
</style>

<style scoped>
.screen {
  position: relative;
  width: 1366px;
  height: 768px;
  overflow: hidden;
  font: 12px/16px "Liberation Sans", "Noto Sans CJK SC", sans-serif;
  color: #1c1c1c;
  background: #f0f0f0;
}
i, b, em {
  font-style: normal;
  font-weight: 400;
  display: block;
}
.ico {
  flex: none;
  width: 16px;
  height: 16px;
  display: block;
}

/* 标题栏 */
.titlebar {
  height: 23px;
  display: flex;
  align-items: center;
  padding-left: 2px;
  background: #fff;
}
.app-ico {
  width: 15px;
  height: 15px;
}
.title-text {
  margin-left: 5px;
  font-size: 12.75px;
  color: #6e6e6e;
  white-space: nowrap;
}
.winbtns {
  margin-left: auto;
  display: flex;
  padding-right: 2px;
}
.winbtns svg {
  width: 46px;
  height: 20px;
}

/* 菜单栏 */
.menubar {
  height: 29px;
  display: flex;
  align-items: center;
  gap: 10.25px;
  padding-left: 7px;
  background: #fff;
}
.menu {
  white-space: nowrap;
}
.newdoc {
  display: flex;
  align-items: center;
  gap: 3px;
  margin-left: -1px;
}
.news {
  margin-left: auto;
  margin-right: -7px;
  width: 185px;
  height: 28px;
  box-sizing: border-box;
  padding-right: 27px;
  line-height: 28px;
  text-align: right;
  color: #3c5a14;
  background: #f6f6f6;
  border-radius: 3px;
}
.account {
  width: 243px;
  height: 28px;
  box-sizing: border-box;
  display: flex;
  align-items: center;
  padding-left: 7px;
  background: #f6f6f6;
  border-radius: 3px;
}
.phone {
  margin-left: 5px;
  font-size: 13px;
}
.account .caret {
  margin: 0 6px 0 7px;
}
.bell {
  margin-left: 8px;
}
.more {
  font: 700 13px/14px "Liberation Sans", sans-serif;
  color: #222;
  margin-left: auto;
  padding-right: 4px;
  align-self: flex-start;
  margin-top: 4px;
}
.caret {
  width: 0;
  height: 0;
  border: 3px solid transparent;
  border-top: 3px solid #222;
  border-bottom: 0;
}
.drop {
  flex: none;
  width: 0;
  border-width: 3px 3.500px 0;
  border-style: solid;
  border-color: #222 transparent transparent;
}

/* 主体 */
.desk {
  display: grid;
  grid-template-columns: 170px 1fr;
  grid-template-rows: 30px 28px 28px 30px 508px 30px;
  height: 654px;
}
.toolrow {
  display: flex;
  align-items: center;
  min-width: 0;
  white-space: nowrap;
}
.r1 {
  grid-column: 1 / 3;
  grid-row: 1;
  gap: 3px;
  padding-top: 1px;
}
.r2 { grid-column: 2; grid-row: 2; padding-left: 2px; }
.r3 { grid-column: 2; grid-row: 3; padding-left: 2px; padding-top: 1px; }
.r4 { grid-column: 2; grid-row: 4; padding-left: 2px; padding-top: 2px; }
.r5 { grid-column: 2; grid-row: 6; padding-left: 2px; gap: 3px; }
.seg {
  height: 27px;
  box-sizing: border-box;
  flex: none;
  display: flex;
  align-items: center;
  gap: 7px;
  padding-left: 3px;
  background: #f7f7f7;
  border-radius: 3px;
}
.s-file { width: 150px; gap: 6px; padding-left: 5px; }
.s-main { width: 547px; padding-left: 4px; }
.s-view { width: 632px; gap: 6px; padding-left: 2px; }
.s-end { width: 26px; margin-left: auto; }
.s-edit { width: 789px; }
.s-combos { width: 636px; gap: 7px; }
.s-combos .combo { margin-right: -5px; }
.s-combos .sep { margin-left: 1px; }
.s-axis { width: 422px; margin-left: 3px; }
.s-pick { width: 1068px; }
.s-snap { width: 207px; }
.s-point { width: 260px; }
.s-input { width: 412px; gap: 3px; }
.s-input .combo { margin-right: 1px; }
.s-input .sep { margin: 0 1px; }
.sep {
  flex: none;
  width: 1px;
  height: 20px;
  margin: 0 -1px;
  background: #c8c8c8;
}
.grip {
  flex: none;
  width: 2px;
  height: 16px;
  background: repeating-linear-gradient(#a8a8a8 0 2px, transparent 2px 4px);
}
.tool {
  flex: none;
  display: flex;
  align-items: center;
  gap: 4px;
  height: 22px;
}
.tool.off {
  color: #a4a4a4;
}
.tool.on {
  box-sizing: border-box;
  margin: 0 -4px;
  padding: 0 3px;
  border: 1px solid #1182dc;
  background: #d6e8f8;
}
.combo {
  flex: none;
  box-sizing: border-box;
  height: 24px;
  display: flex;
  align-items: center;
  gap: 4px;
  padding-left: 1px;
  background: #fff;
}
.combo .ico {
  margin-left: 2px;
}
.combo-text {
  flex: 1;
}
.combo-btn {
  width: 12px;
  height: 24px;
  display: flex;
  align-items: center;
  justify-content: center;
  background: #f0f0f0;
}
.label {
  flex: none;
  color: #666;
  font-size: 13px;
}
.field {
  flex: none;
  box-sizing: border-box;
  height: 23px;
  display: flex;
  align-items: center;
  justify-content: flex-end;
  gap: 2px;
  border: 1px solid #7a7a7a;
  background: #f7f7f7;
  color: #7a7a7a;
  font-size: 13px;
}
.spin {
  width: 14px;
  display: flex;
  flex-direction: column;
  align-items: center;
  gap: 5px;
}
.spin i {
  width: 0;
  height: 0;
  border-left: 3px solid transparent;
  border-right: 3px solid transparent;
  border-bottom: 4px solid #666;
}
.spin i + i {
  border-bottom: 0;
  border-top: 4px solid #666;
}
.check {
  flex: none;
  width: 10px;
  height: 10px;
  border: 1px solid #999;
  background: #fff;
}
.blank {
  flex: none;
  width: 24px;
  height: 24px;
  margin-left: -3px;
  background: #fbfbfb;
}

/* 模块导航栏 */
.nav {
  grid-column: 1;
  grid-row: 2 / 7;
  width: 166px;
  padding-top: 2px;
  display: flex;
  flex-direction: column;
}
.nav-head {
  height: 15px;
  line-height: 15px;
  margin-bottom: 1px;
  display: flex;
  justify-content: space-between;
  border: 1px solid #a0a0a0;
  border-right-color: #777;
}
.nav-tools {
  display: flex;
  gap: 8px;
  padding: 2px 4px 0 0;
}
.nav-tools svg {
  width: 10px;
  height: 12px;
}
.nav-btn {
  height: 22px;
  margin: 0 0 0 1px;
  padding: 0;
  width: 165px;
  flex: none;
  font: inherit;
  color: #1c1c1c;
  background: #f0f0f0;
  border: 0;
  border-top: 1px solid #a8a8a8;
  border-bottom: 1px solid #a8a8a8;
  border-right: 1px solid #a8a8a8;
}
.tree {
  flex: 1;
  min-height: 0;
  margin: 0 2px 0 3px;
  display: flex;
  flex-direction: column;
  background: #fff;
  border: 1px solid #a0a0a0;
  border-bottom-color: #888;
  height: 515px;
}
.tree-tools {
  height: 27px;
  flex: none;
  display: flex;
  align-items: center;
  gap: 6px;
  padding-left: 2px;
}
.tree-tools svg {
  width: 16px;
  height: 16px;
}
.tree-mid {
  height: 470px;
  flex: none;
  display: flex;
  min-height: 0;
}
.tree-list {
  list-style: none;
  margin: 0;
  padding: 1px 0 0;
  width: 142px;
  height: 469px;
  overflow: hidden;
}
.row {
  position: relative;
  height: 16px;
  display: flex;
  align-items: center;
  white-space: nowrap;
}
.row.trunk::before {
  content: "";
  position: absolute;
  left: 11px;
  top: 0;
  bottom: 0;
  border-left: 1px dotted #777;
}
.group {
  padding-left: 5px;
}
.group::after {
  content: "";
  position: absolute;
  left: 16px;
  width: 6px;
  top: 8px;
  border-top: 1px dotted #777;
}
.chev {
  width: 10px;
  height: 8px;
  position: relative;
  z-index: 1;
  background: #fff;
}
.group .ico {
  margin-left: 8px;
}
.group .tree-name {
  margin-left: 5px;
}
.leaf {
  padding-left: 39px;
}
.leaf::after {
  content: "";
  position: absolute;
  left: 30px;
  width: 10px;
  top: 0;
  height: 8px;
  border-left: 1px dotted #777;
  border-bottom: 1px dotted #777;
}
.leaf:not(.tail) .leaf-in::before {
  content: "";
  position: absolute;
  left: 30px;
  top: 8px;
  bottom: 0;
  border-left: 1px dotted #777;
}
.leaf-in {
  display: flex;
  align-items: center;
  gap: 5px;
  height: 16px;
  padding: 0 4px 0 2px;
}
.leaf-in.sel {
  background: #d9d9d9;
}
.tree-name em {
  display: inline;
  font: 10px/16px "Liberation Mono", monospace;
}
.vscroll {
  width: 16px;
  display: flex;
  flex-direction: column;
  background: #f0f0f0;
}
.vscroll svg {
  flex: none;
  width: 16px;
  height: 20px;
}
.vtrack {
  flex: 1;
  padding-top: 194px;
}
.vthumb {
  height: 209px;
  background: #cdcdcd;
}
.hscroll {
  height: 17px;
  flex: none;
  display: flex;
  align-items: center;
  background: #f0f0f0;
}
.hscroll svg {
  width: 17px;
  height: 16px;
}
.hthumb {
  width: 102px;
  height: 16px;
  background: #cdcdcd;
}
.hnext {
  margin-left: 1px;
}

/* 绘图区 */
.canvas {
  grid-column: 2;
  grid-row: 5;
  background: #000;
  overflow: hidden;
}
.cad {
  display: block;
}
.axis-text {
  font: 700 14px "Liberation Sans", sans-serif;
}

/* 状态栏 */
.status {
  height: 20px;
  margin-top: 2px;
  display: flex;
  gap: 2px;
  padding-left: 1px;
}
.cell {
  box-sizing: border-box;
  height: 20px;
  line-height: 18px;
  padding-left: 2px;
  white-space: nowrap;
  background: #f4f4f4;
  border: 1px solid #fff;
  border-right-color: #d8d8d8;
  border-bottom-color: #d8d8d8;
}
.cell em {
  display: inline;
  font: 10px/18px "Liberation Mono", monospace;
}
.c1 { width: 147px; }
.c2 { width: 78px; }
.c3 { width: 98px; }
.c4 { width: 48px; }
.c5 { width: 914px; }
.c6 { width: 70px; }

/* 任务栏 */
.taskbar {
  height: 40px;
  display: flex;
  align-items: center;
  background: #06141a;
  color: #fff;
}
.win {
  width: 16px;
  height: 16px;
  margin: 0 16px;
}
.search {
  width: 344px;
  height: 40px;
  box-sizing: border-box;
  display: flex;
  align-items: center;
  padding-left: 12px;
  background: #333;
  color: #8f8f8f;
  font-size: 14px;
}
.cortana {
  flex: none;
  width: 17px;
  height: 17px;
  box-sizing: border-box;
  margin-right: 7px;
  border: 3px solid #d8d8d8;
  border-radius: 50%;
}
.search svg {
  width: 16px;
  height: 20px;
  margin-left: auto;
  margin-right: 13px;
}
.apps {
  display: flex;
  margin-left: 2px;
}
.app {
  position: relative;
  width: 49px;
  height: 40px;
  display: flex;
  align-items: center;
  justify-content: center;
}
.app svg {
  width: 24px;
  height: 24px;
}
.app.shift {
  margin-left: 5px;
}
.app.active {
  background: #2a3a42;
}
.app.open::after {
  content: "";
  position: absolute;
  left: 4px;
  right: 4px;
  bottom: 0;
  height: 2px;
  background: #76b9ed;
}
.app.active::after {
  left: 0;
  right: 0;
}
.tray {
  margin-left: auto;
  display: flex;
  align-items: center;
  padding-right: 15px;
  height: 40px;
}
.cpu,
.clock {
  text-align: center;
  line-height: 17px;
  font-size: 12px;
  white-space: nowrap;
}
.cpu {
  width: 60px;
  margin-right: 8px;
}
.tray-ico {
  display: flex;
  justify-content: center;
}
.tray-ico svg {
  width: 18px;
  height: 18px;
}
.ime-en {
  width: 20px;
  text-align: center;
  font-weight: 700;
}
.tray-s {
  width: 16px;
  height: 16px;
  margin: 0 11px 0 8px;
  border-radius: 3px;
  background: #e8481c;
  color: #fff;
  font: 700 14px/16px "Liberation Sans", sans-serif;
  text-align: center;
  transform: rotate(-10deg);
}
.clock {
  width: 62px;
  margin-right: 32px;
}
.notify {
  width: 18px;
  height: 18px;
}

/* 浮层 */
.badge {
  position: absolute;
  left: 1181px;
  top: -28px;
  width: 46px;
  height: 46px;
  box-sizing: border-box;
  display: flex;
  align-items: flex-end;
  justify-content: center;
  padding-bottom: 3px;
  border-radius: 50%;
  border: 2px solid #d8efd8;
  background: linear-gradient(#4fc04a, #2f9e38);
  box-shadow: 0 1px 3px rgba(0, 0, 0, 0.5);
  color: #fff;
  font: 700 12px/14px "Liberation Sans", sans-serif;
}
.ime {
  position: absolute;
  left: 825px;
  top: 29px;
  display: flex;
  align-items: center;
}
.ime-logo {
  position: relative;
  z-index: 1;
  width: 26px;
  height: 26px;
  border-radius: 5px;
  background: #ee4a16;
  color: #fff;
  font: 700 24px/26px "Liberation Sans", sans-serif;
  text-align: center;
  transform: rotate(-10deg);
}
.ime-bar {
  height: 23px;
  width: 161px;
  margin-left: -6px;
  padding-left: 11px;
  box-sizing: border-box;
  display: flex;
  align-items: center;
  gap: 7px;
  background: #fdfdfd;
  border: 1px solid #c4d4e4;
  color: #1e7fd0;
}
.ime-bar b {
  font-weight: 700;
  font-size: 14px;
}
.ime-punct {
  font-weight: 700;
  width: 14px;
}
.ime-bar svg {
  width: 15px;
  height: 15px;
  flex: none;
}
.dialog {
  position: absolute;
  left: 248px;
  top: 128px;
  width: 469px;
  height: 385px;
  box-sizing: border-box;
  display: flex;
  flex-direction: column;
  background: #f0f0f0;
  border: 1px solid #3a90e0;
  box-shadow: 4px 6px 14px rgba(0, 0, 0, 0.4);
}
.dlg-title {
  height: 26px;
  flex: none;
  display: flex;
  align-items: center;
  justify-content: space-between;
  padding: 0 9px 0 2px;
  background: #fff;
}
.dlg-title svg {
  width: 13px;
  height: 13px;
}
.dlg-radios {
  height: 40px;
  flex: none;
  box-sizing: border-box;
  display: flex;
  padding: 6px 0 0 8px;
  align-items: center;
  border-bottom: 1px solid #d4d4d4;
  border-top: 1px solid #ddd;
}
.radio {
  width: 234px;
  display: flex;
  align-items: center;
  gap: 2px;
}
.radio i {
  width: 11px;
  height: 11px;
  border: 1px solid #666;
  border-radius: 50%;
  background: #fff;
}
.radio.checked i {
  background: radial-gradient(circle, #333 0 3.500px, #fff 4px);
}
.dlg-pic {
  flex: none;
  height: 272px;
  width: 465px;
  margin: 2px 0 0 1px;
  outline: 1px solid #d0d0d0;
  background: #000;
  overflow: hidden;
}
.dlg-pic svg {
  display: block;
}
.pic-text {
  font: 12px "Noto Sans CJK SC", sans-serif;
  fill: #fff;
}
.pic-num {
  font: 12px "Liberation Sans", sans-serif;
  fill: #ddd;
}
.pic-green {
  font: 11px "Liberation Sans", sans-serif;
  fill: #00d000;
}
.pic-sel {
  font: 12px "Liberation Sans", sans-serif;
  fill: #fff;
}
.dlg-foot {
  flex: 1;
  display: flex;
  justify-content: flex-end;
  align-items: flex-start;
  gap: 24px;
  padding: 11px 13px 0 0;
}
.dlg-foot button {
  width: 72px;
  height: 23px;
  padding: 0;
  font: inherit;
  color: #1c1c1c;
  background: #e1e1e1;
  border: 1px solid #adadad;
}
.marks {
  position: absolute;
  left: 0;
  top: 0;
  pointer-events: none;
}
</style>
